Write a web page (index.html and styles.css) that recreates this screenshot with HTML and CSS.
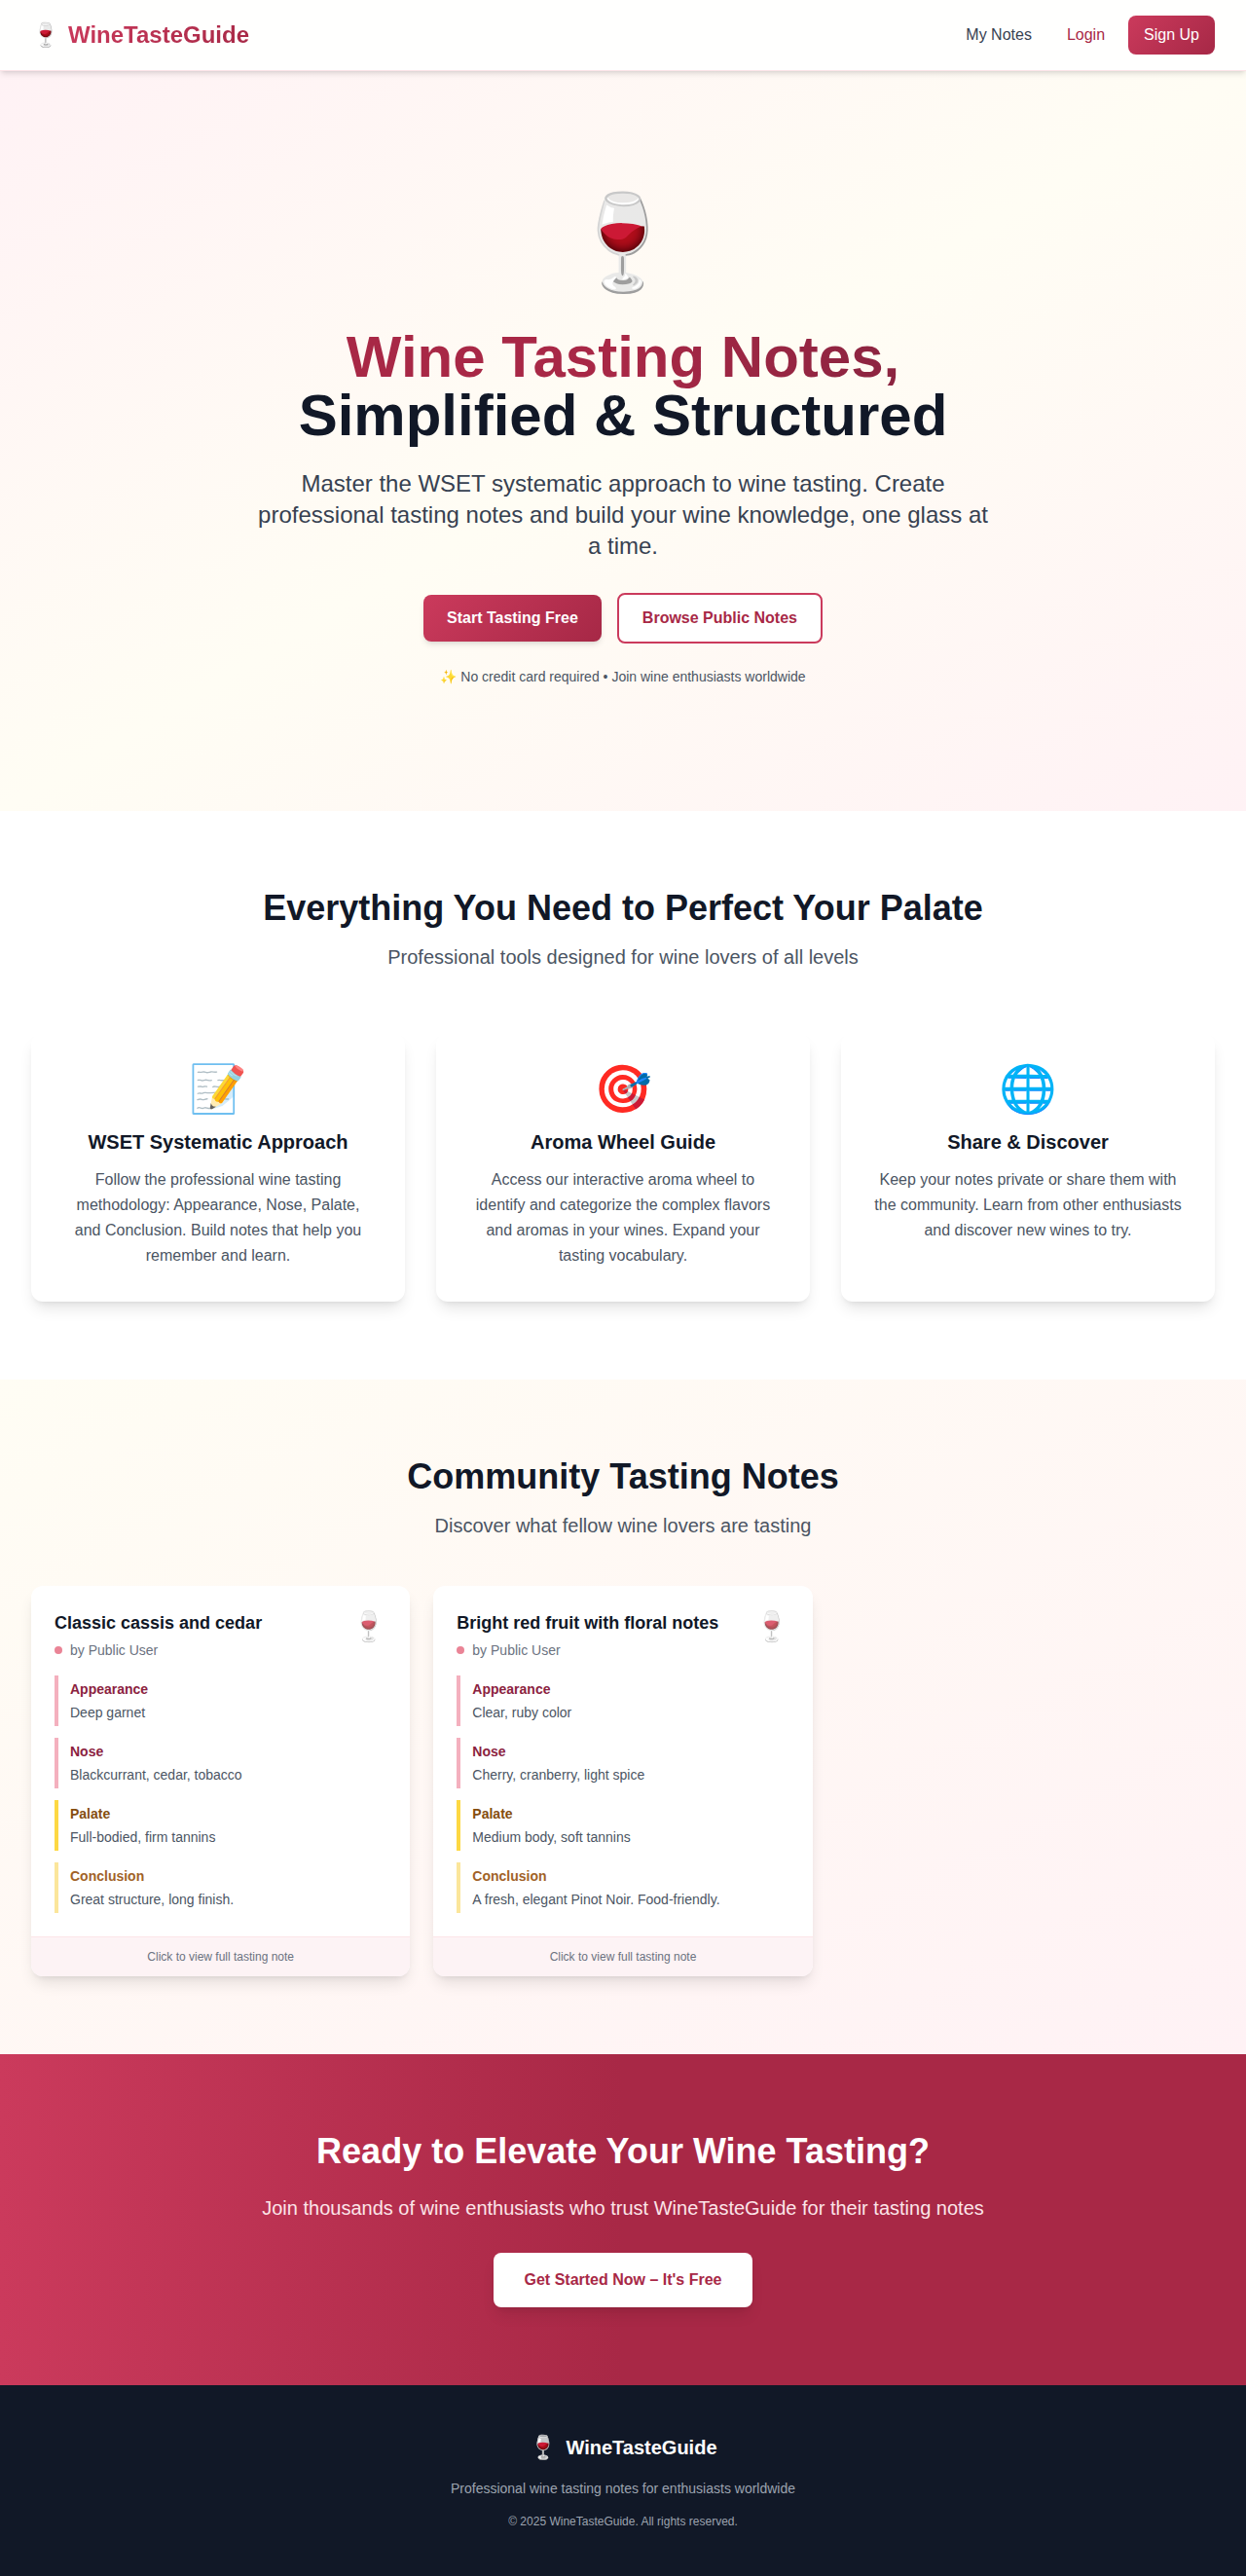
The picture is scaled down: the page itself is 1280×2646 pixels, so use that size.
FILE: index.html
```html
<!DOCTYPE html>
<html lang="en">
<head>
<meta charset="utf-8">
<title>WineTasteGuide</title>
<link rel="stylesheet" href="styles.css">
</head>
<body>
<header class="nav">
  <a class="brand"><span class="brand-icon">🍷</span><span class="brand-name">WineTasteGuide</span></a>
  <nav class="nav-links"><a class="link">My Notes</a><a class="link login">Login</a><a class="signup">Sign Up</a></nav>
</header>
<section class="hero">
  <div class="hero-inner">
    <div class="hero-icon">🍷</div>
    <h1><span class="grad">Wine Tasting Notes,</span><br>Simplified &amp; Structured</h1>
    <p class="lead">Master the WSET systematic approach to wine tasting. Create professional tasting notes and build your wine knowledge, one glass at a time.</p>
    <div class="actions"><a class="btn primary">Start Tasting Free</a><a class="btn outline">Browse Public Notes</a></div>
    <p class="fine">✨ No credit card required • Join wine enthusiasts worldwide</p>
  </div>
</section>
<section class="features">
  <h2>Everything You Need to Perfect Your Palate</h2>
  <p class="sub">Professional tools designed for wine lovers of all levels</p>
  <div class="feature-grid">
    <div class="feature"><div class="feature-icon">📝</div><h3>WSET Systematic Approach</h3><p>Follow the professional wine tasting methodology: Appearance, Nose, Palate, and Conclusion. Build notes that help you remember and learn.</p></div>
    <div class="feature"><div class="feature-icon">🎯</div><h3>Aroma Wheel Guide</h3><p>Access our interactive aroma wheel to identify and categorize the complex flavors and aromas in your wines. Expand your tasting vocabulary.</p></div>
    <div class="feature"><div class="feature-icon">🌐</div><h3>Share &amp; Discover</h3><p>Keep your notes private or share them with the community. Learn from other enthusiasts and discover new wines to try.</p></div>
  </div>
</section>
<section class="community">
  <h2>Community Tasting Notes</h2>
  <p class="sub">Discover what fellow wine lovers are tasting</p>
  <div class="note-grid">
    <article class="note">
      <div class="note-body">
        <div class="note-head"><div><h3>Classic cassis and cedar</h3><p class="by"><i class="dot"></i>by Public User</p></div><span class="note-icon">🍷</span></div>
        <div class="rows">
          <div class="row rose"><h4>Appearance</h4><p>Deep garnet</p></div>
          <div class="row rose"><h4>Nose</h4><p>Blackcurrant, cedar, tobacco</p></div>
          <div class="row gold"><h4>Palate</h4><p>Full-bodied, firm tannins</p></div>
          <div class="row pale"><h4>Conclusion</h4><p>Great structure, long finish.</p></div>
        </div>
      </div>
      <div class="note-foot">Click to view full tasting note</div>
    </article>
    <article class="note">
      <div class="note-body">
        <div class="note-head"><div><h3>Bright red fruit with floral notes</h3><p class="by"><i class="dot"></i>by Public User</p></div><span class="note-icon">🍷</span></div>
        <div class="rows">
          <div class="row rose"><h4>Appearance</h4><p>Clear, ruby color</p></div>
          <div class="row rose"><h4>Nose</h4><p>Cherry, cranberry, light spice</p></div>
          <div class="row gold"><h4>Palate</h4><p>Medium body, soft tannins</p></div>
          <div class="row pale"><h4>Conclusion</h4><p>A fresh, elegant Pinot Noir. Food-friendly.</p></div>
        </div>
      </div>
      <div class="note-foot">Click to view full tasting note</div>
    </article>
  </div>
</section>
<section class="cta">
  <h2>Ready to Elevate Your Wine Tasting?</h2>
  <p>Join thousands of wine enthusiasts who trust WineTasteGuide for their tasting notes</p>
  <a class="cta-btn">Get Started Now – It's Free</a>
</section>
<footer class="footer">
  <div class="foot-brand"><span class="foot-icon">🍷</span><span>WineTasteGuide</span></div>
  <p class="foot-tag">Professional wine tasting notes for enthusiasts worldwide</p>
  <p class="foot-copy">© 2025 WineTasteGuide. All rights reserved.</p>
</footer>
</body>
</html>
```
FILE: styles.css
```css
*{box-sizing:border-box;margin:0;padding:0}
body{font-family:"Liberation Sans",Arial,sans-serif;font-size:16px;line-height:24px;color:#111827;background:#fff}
.nav{position:relative;z-index:1;height:73px;padding:0 32px;display:flex;align-items:center;justify-content:space-between;background:#fffffe;border-bottom:1px solid #fce4e8;box-shadow:0 4px 6px -1px rgba(0,0,0,.1),0 2px 4px -2px rgba(0,0,0,.1)}
.brand{display:flex;align-items:center;gap:8px}
.brand-icon{font-size:24px;line-height:32px}
.brand-name{font-size:24px;line-height:32px;font-weight:700;color:transparent;background:linear-gradient(135deg,#cb3a5c,#a62846);background-clip:text;-webkit-background-clip:text}
.nav-links{display:flex;align-items:center;gap:24px}
.link{color:#374151}
.link.login{color:#a82846;padding-left:12px}
.signup{height:40px;padding:8px 16px;border-radius:8px;color:#fff;background:linear-gradient(135deg,#cb3a5c,#a62846)}
.hero{height:760px;padding:112px 0 0;text-align:center;background:linear-gradient(to bottom right,#fff2f5,#fffdf4 50%,#fff2f5)}
.hero-inner{width:768px;margin:0 auto}
.hero-icon{font-size:96px;line-height:128px;margin-bottom:24px}
h1{font-size:60px;line-height:60px;font-weight:700;margin-bottom:24px}
.grad{color:transparent;background:linear-gradient(90deg,#a82846 50%,#8b2440);background-clip:text;-webkit-background-clip:text}
.lead{font-size:24px;line-height:32px;color:#374151;margin-bottom:32px}
.actions{display:flex;justify-content:center;align-items:center;gap:16px;margin-bottom:24px}
.btn{font-weight:600;border-radius:8px;padding:12px 24px}
.primary{color:#fff;background:linear-gradient(135deg,#cb3a5c,#a62846);box-shadow:0 4px 6px -1px rgba(0,0,0,.1),0 2px 4px -2px rgba(0,0,0,.1)}
.outline{color:#a82846;background:#fff;border:2px solid #cb3a5c}
.fine{font-size:14px;line-height:20px;color:#4b5563}
h2{font-size:36px;line-height:40px;font-weight:700;text-align:center}
.sub{font-size:20px;line-height:28px;color:#4b5563;text-align:center}
.features{height:584px;padding:80px 32px}
.features h2,.community h2{margin-bottom:16px}
.features .sub{margin-bottom:64px}
.feature-grid{display:grid;grid-template-columns:repeat(3,1fr);gap:32px}
.feature{padding:32px;text-align:center;border:2px solid transparent;border-radius:12px;background:#fff;box-shadow:0 10px 15px -3px rgba(0,0,0,.1),0 4px 6px -4px rgba(0,0,0,.1)}
.feature-icon{font-size:48px;line-height:48px;margin-bottom:16px}
.feature h3{font-size:20px;line-height:28px;margin-bottom:12px}
.feature p{line-height:26px;color:#4b5563}
.community{height:693px;padding:80px 32px;background:linear-gradient(to bottom right,#fffdf4,#fff2f5)}
.community .sub{margin-bottom:48px}
.note-grid{display:grid;grid-template-columns:repeat(3,1fr);gap:24px}
.note{border-radius:12px;background:#fff;overflow:hidden;box-shadow:0 10px 15px -3px rgba(0,0,0,.1),0 4px 6px -4px rgba(0,0,0,.1)}
.note-body{padding:24px}
.note-head{display:flex;justify-content:space-between;margin-bottom:16px}
.note h3{font-size:18px;line-height:28px}
.by{display:flex;align-items:center;gap:8px;font-size:14px;line-height:20px;color:#6b7280;margin-top:4px}
.dot{width:8px;height:8px;border-radius:50%;background:#ea8496}
.note-icon{font-size:30px;line-height:36px;opacity:.7}
.rows{display:grid;gap:12px}
.row{border-left:4px solid;padding:4px 0 4px 12px;font-size:14px}
.row h4{line-height:20px;font-size:14px;margin-bottom:4px}
.row p{line-height:20px;color:#4b5563}
.row.rose{border-color:#f4b0be;color:#8b2240}
.row.gold{border-color:#fdd843;color:#854d0e}
.row.pale{border-color:#fbe69b;color:#a16227}
.note-foot{height:41px;border-top:1px solid #fce4e8;background:#fdf3f5;text-align:center;font-size:12px;line-height:40px;color:#6b7280}
.cta{height:340px;padding:80px 0;text-align:center;color:#fff;background:linear-gradient(90deg,#cb3a5c,#a82846 50%)}
.cta h2{margin-bottom:24px}
.cta p{font-size:20px;line-height:28px;margin-bottom:32px;color:#fce4e8}
.cta-btn{display:inline-block;padding:16px 32px;border-radius:8px;color:#a82846;background:#fff;font-weight:600;box-shadow:0 10px 15px -3px rgba(0,0,0,.1),0 4px 6px -4px rgba(0,0,0,.1)}
.footer{height:196px;padding:48px 0;text-align:center;background:#111827;color:#9ca3af}
.foot-brand{display:flex;justify-content:center;align-items:center;gap:8px;font-size:20px;line-height:32px;font-weight:700;color:#fff;margin-bottom:16px}
.foot-icon{font-size:24px}
.foot-tag{font-size:14px;line-height:20px;margin-bottom:16px}
.foot-copy{font-size:12px;line-height:16px}
```
